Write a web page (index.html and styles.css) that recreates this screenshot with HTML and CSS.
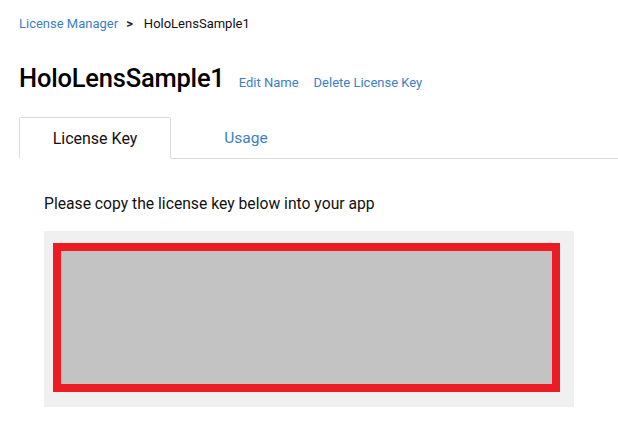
FILE: index.html
```html
<!DOCTYPE html>
<html>
<head>
<meta charset="utf-8">
<link rel="stylesheet" href="styles.css">
</head>
<body>
<div class="page">
  <nav class="breadcrumb">
    <a class="crumb-link">License Manager</a>
    <span class="crumb-sep">&gt;</span>
    <span class="crumb-current">HoloLensSample1</span>
  </nav>
  <div class="title-row">
    <h1 class="title">HoloLensSample1</h1>
    <a class="action">Edit Name</a>
    <a class="action">Delete License Key</a>
  </div>
  <div class="tabs">
    <div class="tab active">License Key</div>
    <div class="tab">Usage</div>
  </div>
  <div class="panel">
    <p class="instructions">Please copy the license key below into your app</p>
    <div class="key-box">
      <div class="key-redacted"></div>
    </div>
  </div>
</div>
</body>
</html>
```
FILE: styles.css
```css
html, body {
  margin: 0;
  padding: 0;
  background: #ffffff;
}
body {
  font-family: Roboto, "Liberation Sans", sans-serif;
  color: #111;
}
.page {
  padding: 0 0 0 19px;
}
.breadcrumb {
  display: flex;
  align-items: baseline;
  height: 16px;
  padding-top: 16px;
  font-size: 13px;
  line-height: 16px;
}
.crumb-link {
  color: #3b7fc4;
}
.crumb-sep {
  margin: 0 11px 0 8px;
  font-weight: 700;
  color: #222;
}
.crumb-current {
  color: #111;
}
.title-row {
  display: flex;
  align-items: baseline;
  margin-top: 31px;
  height: 30px;
}
.title {
  margin: 0;
  font-size: 25.5px;
  font-weight: 500;
  line-height: 30px;
  color: #000;
  letter-spacing: -0.2px;
}
.action {
  font-size: 13px;
  color: #3b7fc4;
  margin-left: 14px;
}
.action + .action {
  margin-left: 15px;
}
.tabs {
  display: flex;
  margin-top: 24px;
  border-bottom: 1px solid #dcdcdc;
  height: 41px;
}
.tab {
  width: 152px;
  box-sizing: border-box;
  text-align: center;
  font-size: 15.5px;
  line-height: 43px;
  color: #3b7fc4;
  margin-bottom: -1px;
}
.tab.active {
  color: #111;
  font-size: 16px;
  border: 1px solid #dcdcdc;
  border-bottom: 1px solid #fff;
  border-radius: 2px 2px 0 0;
  background: #fff;
  line-height: 41px;
}
.tab + .tab {
  width: 150px;
}
.panel {
  padding: 36px 0 0 25px;
}
.instructions {
  margin: 0;
  font-size: 15.7px;
  line-height: 18px;
  color: #111;
}
.key-box {
  margin-top: 18px;
  width: 530px;
  height: 176px;
  box-sizing: border-box;
  background: #f0f0f0;
  padding: 12px 0 0 9px;
}
.key-redacted {
  width: 507px;
  height: 149px;
  box-sizing: border-box;
  border: 8px solid #ed1c24;
  background: #c3c3c3;
}
```
